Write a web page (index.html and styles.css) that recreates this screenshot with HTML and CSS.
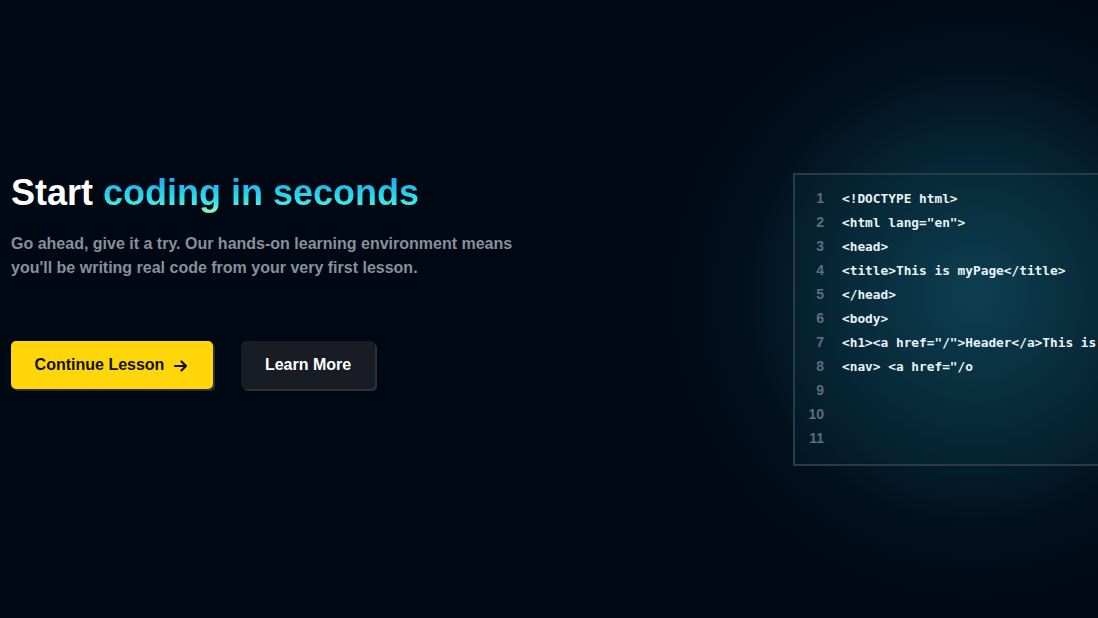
FILE: index.html
```html
<!DOCTYPE html>
<html lang="en">
<head>
<meta charset="utf-8">
<link rel="stylesheet" href="styles.css">
</head>
<body>
<main class="hero">
  <section class="intro">
    <h1 class="title">Start <span class="grad">coding in seconds</span></h1>
    <p class="lead">Go ahead, give it a try. Our hands-on learning environment means you'll be writing real code from your very first lesson.</p>
    <div class="actions">
      <a class="btn btn-primary" href="#">Continue Lesson
        <svg class="arrow" width="16" height="16" viewBox="0 0 16 16" aria-hidden="true"><path d="M2 8h11M8.5 3.5L13 8l-4.5 4.5" fill="none" stroke="currentColor" stroke-width="2.2" stroke-linecap="round" stroke-linejoin="round"/></svg>
      </a>
      <a class="btn btn-dark" href="#">Learn More</a>
    </div>
  </section>
  <section class="stage">
    <div class="editor">
      <div class="line"><span class="num">1</span><span class="code">&lt;!DOCTYPE html&gt;</span></div>
      <div class="line"><span class="num">2</span><span class="code">&lt;html lang="en"&gt;</span></div>
      <div class="line"><span class="num">3</span><span class="code">&lt;head&gt;</span></div>
      <div class="line"><span class="num">4</span><span class="code">&lt;title&gt;This is myPage&lt;/title&gt;</span></div>
      <div class="line"><span class="num">5</span><span class="code">&lt;/head&gt;</span></div>
      <div class="line"><span class="num">6</span><span class="code">&lt;body&gt;</span></div>
      <div class="line"><span class="num">7</span><span class="code">&lt;h1&gt;&lt;a href="/"&gt;Header&lt;/a&gt;This is</span></div>
      <div class="line"><span class="num">8</span><span class="code">&lt;nav&gt; &lt;a href="/o</span></div>
      <div class="line"><span class="num">9</span><span class="code"></span></div>
      <div class="line"><span class="num">10</span><span class="code"></span></div>
      <div class="line"><span class="num">11</span><span class="code"></span></div>
    </div>
  </section>
</main>
</body>
</html>
```

FILE: styles.css
```css
* { box-sizing: border-box; }
html, body { margin: 0; height: 100%; }
body {
  background: #000814;
  font-family: "Liberation Sans", Arial, sans-serif;
  overflow: hidden;
}
.hero {
  height: 618px;
  display: flex;
  align-items: flex-start;
  background:
    radial-gradient(circle at 975px 295px, rgba(22, 104, 126, 0.62) 0, rgba(14, 76, 96, 0.46) 130px, rgba(6, 38, 56, 0.22) 240px, rgba(0, 8, 20, 0) 340px),
    #000814;
}
.intro {
  width: 600px;
  padding: 171px 0 0 11px;
  flex: none;
}
.title {
  margin: 0;
  font-size: 36px;
  line-height: 44px;
  font-weight: 700;
  color: #ffffff;
}
.grad {
  background: linear-gradient(to bottom, #1ea9ee 15%, #25cfec 50%, #3ae2e8 72%, #8af0c4 95%);
  -webkit-background-clip: text;
  background-clip: text;
  color: transparent;
}
.lead {
  margin: 17px 0 0;
  width: 510px;
  font-size: 16px;
  line-height: 24px;
  font-weight: 700;
  color: #8a8f99;
}
.actions {
  display: flex;
  gap: 28px;
  margin-top: 61px;
}
.btn {
  display: inline-flex;
  align-items: center;
  justify-content: center;
  height: 48px;
  border-radius: 5px;
  font-size: 16px;
  font-weight: 700;
  text-decoration: none;
}
.btn-primary {
  width: 202px;
  gap: 9px;
  background: #ffd60a;
  color: #111111;
  box-shadow: 2px 2px 0 #2a2f38;
}
.arrow { margin-top: 1px; }
.btn-dark {
  width: 134px;
  background: #191c25;
  color: #ffffff;
  box-shadow: 2px 2px 0 #2b303a;
}
.stage {
  flex: 1;
  padding: 173px 0 0 193px;
  overflow: hidden;
}
.editor {
  width: 400px;
  height: 293px;
  border: 2px solid #2a3a46;
  border-right: none;
  background: rgba(12, 48, 64, 0.22);
  padding-top: 11px;
  font-family: "DejaVu Sans Mono", "Liberation Mono", monospace;
  white-space: nowrap;
}
.line {
  display: flex;
  align-items: center;
  height: 24px;
}
.num {
  flex: none;
  width: 29px;
  text-align: right;
  font-family: "Liberation Sans", Arial, sans-serif;
  font-size: 14px;
  font-weight: 700;
  color: #5e6e7b;
}
.code {
  flex: none;
  padding-left: 18px;
  font-size: 12.8px;
  font-weight: 700;
  color: #e8f3f7;
}
```
